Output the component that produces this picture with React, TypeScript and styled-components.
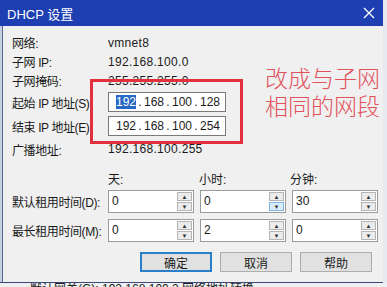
import React from 'react';
import styled, { createGlobalStyle } from 'styled-components';

const GlobalStyle = createGlobalStyle`
  html, body {
    margin: 0;
    padding: 0;
    background: #dfe4ec;
    overflow: hidden;
  }
  body {
    font-family: "Liberation Sans", "Noto Sans CJK SC", sans-serif;
    font-size: 12px;
    color: #1a1a1a;
  }
`;

const Screen = styled.div`
  position: relative;
  width: 387px;
  height: 287px;
  overflow: hidden;
  background: #e6e9ef;
`;

const Dialog = styled.div`
  width: 383px;
  height: 283px;
  display: flex;
  flex-direction: column;
  background: #f0f0f0;
  border-bottom: 1px solid #3c4a78;
  box-sizing: border-box;
`;

const TitleBar = styled.div`
  height: 26px;
  flex: none;
  background: #1d3fb2;
  color: #fff;
  display: flex;
  align-items: center;
  justify-content: space-between;
  padding: 0 8px 0 7px;
  font-size: 13px;
`;

const Body = styled.div`
  flex: 1;
  display: flex;
  flex-direction: column;
  padding: 7px 0 0 10px;
  border-left: 2px solid #c6cfe4;
  box-shadow: inset 1px 0 0 #58658e;
`;

const Row = styled.div<{ h: number }>`
  height: ${(p) => p.h}px;
  display: flex;
  align-items: center;
`;

const Label = styled.div`
  width: 96px;
  flex: none;
  white-space: nowrap;
  letter-spacing: -0.4px;
`;

const Value = styled.div`
  letter-spacing: 0.3px;
`;

const IpBox = styled.div`
  width: 118px;
  height: 20px;
  box-sizing: border-box;
  border: 1px solid #7a7a7a;
  background: #fff;
  display: flex;
  align-items: center;
  padding-left: 7px;
`;

const Seg = styled.span<{ selected?: boolean }>`
  display: inline-block;
  width: 20px;
  text-align: center;
  background: ${(p) => (p.selected ? '#2768c4' : 'transparent')};
  color: ${(p) => (p.selected ? '#fff' : '#1a1a1a')};
  line-height: 14px;
`;

const Dot = styled.span`
  display: inline-block;
  width: 8px;
  text-align: center;
`;

const UnitRow = styled.div`
  display: flex;
  gap: 7px;
  height: 18px;
  align-items: center;
  margin-top: 9px;
  padding-left: 96px;
`;

const Unit = styled.div`
  width: 84px;
`;

const SpinGroup = styled.div`
  display: flex;
  gap: 6px;
`;

const Spin = styled.div`
  width: 86px;
  height: 23px;
  box-sizing: border-box;
  border: 1px solid #9b9b9b;
  background: #fff;
  display: flex;
  align-items: stretch;
`;

const SpinText = styled.div`
  flex: 1;
  padding: 3px 0 0 3px;
`;

const SpinButtons = styled.div`
  width: 15px;
  display: flex;
  flex-direction: column;
  gap: 1px;
  padding: 1px 1px 1px 0;
`;

const SpinBtn = styled.div<{ hot?: boolean }>`
  flex: 1;
  background: ${(p) => (p.hot ? '#d9ecfa' : '#ececec')};
  border: 1px solid ${(p) => (p.hot ? '#7eb4ea' : '#b5b5b5')};
  display: flex;
  align-items: center;
  justify-content: center;
  font-size: 6px;
  color: #333;
`;

const Buttons = styled.div`
  display: flex;
  gap: 8px;
  margin-top: 7px;
  padding-left: 128px;
`;

const Button = styled.div<{ primary?: boolean }>`
  width: 72px;
  height: 20px;
  box-sizing: border-box;
  background: #e1e1e1;
  border: ${(p) => (p.primary ? '2px solid #2a7fc9' : '1px solid #adadad')};
  display: flex;
  align-items: center;
  justify-content: center;
`;

const Highlight = styled.div`
  position: absolute;
  left: 90px;
  top: 79px;
  width: 153px;
  height: 65px;
  box-sizing: border-box;
  border: 3px solid #e2303c;
`;

const Note = styled.div`
  position: absolute;
  left: 265px;
  top: 63px;
  font-family: "Noto Sans CJK SC", sans-serif;
  font-weight: 300;
  font-size: 23px;
  line-height: 28px;
  color: #e2525c;
  white-space: nowrap;
`;

const Under = styled.div`
  height: 4px;
  overflow: hidden;
  background: #eef0f4;
  font-size: 12px;
  line-height: 12px;
  color: #222;
  padding-left: 30px;
`;

const ip = (parts: string[], selectFirst?: boolean) => (
  <IpBox>
    {parts.map((p, i) => (
      <React.Fragment key={i}>
        {i > 0 && <Dot>.</Dot>}
        <Seg selected={selectFirst && i === 0}>{p}</Seg>
      </React.Fragment>
    ))}
  </IpBox>
);

const spin = (value: string, hotDown?: boolean) => (
  <Spin>
    <SpinText>{value}</SpinText>
    <SpinButtons>
      <SpinBtn>▲</SpinBtn>
      <SpinBtn hot={hotDown}>▼</SpinBtn>
    </SpinButtons>
  </Spin>
);

const App: React.FC = () => {
  return (
    <Screen>
      <GlobalStyle />
      <Dialog>
        <TitleBar>
          <span>DHCP 设置</span>
          <svg width="12" height="12" viewBox="0 0 12 12">
            <path d="M1 1 L11 11 M11 1 L1 11" stroke="#fff" strokeWidth="1.3" />
          </svg>
        </TitleBar>
        <Body>
          <Row h={19}>
            <Label>网络:</Label>
            <Value>vmnet8</Value>
          </Row>
          <Row h={19}>
            <Label>子网 IP:</Label>
            <Value>192.168.100.0</Value>
          </Row>
          <Row h={19}>
            <Label>子网掩码:</Label>
            <Value>255.255.255.0</Value>
          </Row>
          <Row h={24}>
            <Label>起始 IP 地址(S):</Label>
            {ip(['192', '168', '100', '128'], true)}
          </Row>
          <Row h={24}>
            <Label>结束 IP 地址(E):</Label>
            {ip(['192', '168', '100', '254'])}
          </Row>
          <Row h={22}>
            <Label>广播地址:</Label>
            <Value>192.168.100.255</Value>
          </Row>
          <UnitRow>
            <Unit>天:</Unit>
            <Unit>小时:</Unit>
            <Unit>分钟:</Unit>
          </UnitRow>
          <Row h={29}>
            <Label>默认租用时间(D):</Label>
            <SpinGroup>
              {spin('0')}
              {spin('0', true)}
              {spin('30')}
            </SpinGroup>
          </Row>
          <Row h={29}>
            <Label>最长租用时间(M):</Label>
            <SpinGroup>
              {spin('0')}
              {spin('2')}
              {spin('0')}
            </SpinGroup>
          </Row>
          <Buttons>
            <Button primary>确定</Button>
            <Button>取消</Button>
            <Button>帮助</Button>
          </Buttons>
        </Body>
      </Dialog>
      <Under>默认网关(G):  192.168.100.2   网络地址转换</Under>
      <Highlight />
      <Note>
        改成与子网
        <br />
        相同的网段
      </Note>
    </Screen>
  );
};

export default App;
